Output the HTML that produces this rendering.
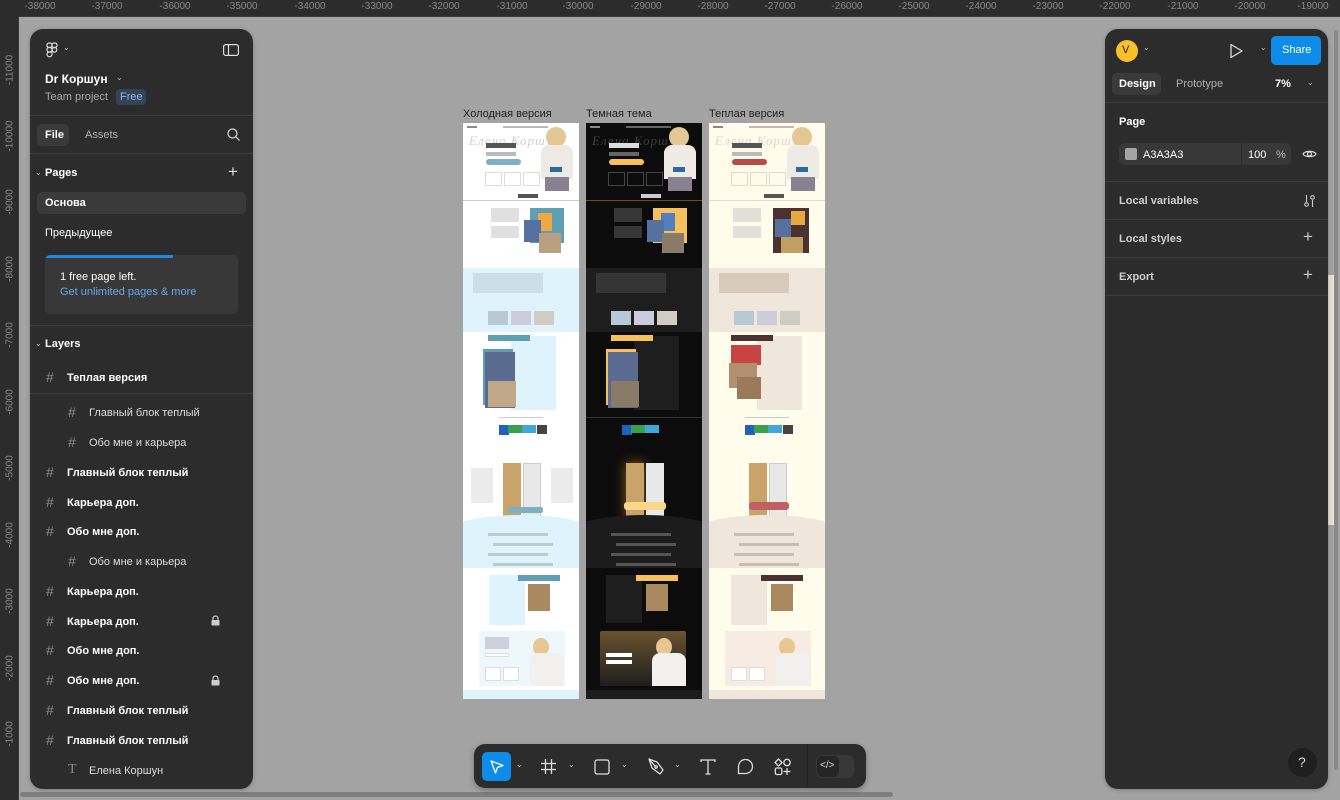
<!DOCTYPE html>
<html><head><meta charset="utf-8">
<style>
*{box-sizing:border-box;margin:0;padding:0}
body{width:1340px;height:800px;overflow:hidden;background:#a3a3a3;font-family:"Liberation Sans",sans-serif;position:relative;color:#fff}
.abs{position:absolute}
.rt{position:absolute;left:0;top:0;width:1340px;height:17px;background:#2c2c2c;border-bottom:1px solid #3a3a3a}
.rl{position:absolute;left:0;top:0;width:19px;height:800px;background:#2c2c2c;border-right:1px solid #3a3a3a}
.rt span{position:absolute;top:1px;font-size:10px;color:#8a8a8a;transform:translateX(-50%)}
.rl span{position:absolute;left:10px;font-size:10px;color:#8a8a8a;transform:translate(-50%,-50%) rotate(-90deg);white-space:nowrap}
.panel{position:absolute;background:#2c2c2c;border-radius:13px;box-shadow:0 1px 4px rgba(0,0,0,.25)}
.t{position:absolute;font-size:11px;white-space:nowrap}
.b{font-weight:bold}
.sep{position:absolute;left:0;right:0;height:1px;background:#3d3d3d}
.lay{position:absolute;font-size:11px;white-space:nowrap;color:#fff}
.hash{position:absolute;font-size:14px;color:#8a8a8a}
.fr{position:absolute;top:123px;width:116px;height:576px;overflow:hidden}
.fr div{position:absolute}
.fr .scr{white-space:nowrap;font-size:13px;font-style:italic;font-family:'Liberation Serif',serif;letter-spacing:1px}
.lbl{position:absolute;top:108px;font-size:11px;color:#1e1e1e}
</style></head><body>

<div class="rt">
<span style="left:40px">-38000</span><span style="left:107px">-37000</span><span style="left:175px">-36000</span><span style="left:242px">-35000</span><span style="left:310px">-34000</span><span style="left:377px">-33000</span><span style="left:444px">-32000</span><span style="left:512px">-31000</span><span style="left:578px">-30000</span><span style="left:646px">-29000</span><span style="left:713px">-28000</span><span style="left:780px">-27000</span><span style="left:847px">-26000</span><span style="left:914px">-25000</span><span style="left:981px">-24000</span><span style="left:1048px">-23000</span><span style="left:1115px">-22000</span><span style="left:1183px">-21000</span><span style="left:1250px">-20000</span><span style="left:1313px">-19000</span>
</div>
<div class="rl">
<span style="top:70px">-11000</span><span style="top:136px">-10000</span><span style="top:202px">-9000</span><span style="top:269px">-8000</span><span style="top:335px">-7000</span><span style="top:402px">-6000</span><span style="top:468px">-5000</span><span style="top:535px">-4000</span><span style="top:601px">-3000</span><span style="top:668px">-2000</span><span style="top:734px">-1000</span>
</div>
<div class="abs" style="left:0;top:0;width:19px;height:17px;background:#2c2c2c"></div>
<div class="abs" style="left:20px;top:792px;width:873px;height:5px;background:#7e7e7e;border-radius:3px"></div>
<div class="abs" style="left:1334px;top:30px;width:4px;height:740px;background:#8a8a8a;border-radius:2px"></div>
<div class="abs" style="left:1328px;top:275px;width:6px;height:250px;background:#e8e2d4"></div>

<!-- LEFT PANEL -->
<div class="panel" style="left:30px;top:29px;width:223px;height:760px">
 <svg class="abs" style="left:16px;top:13px" width="12" height="16" viewBox="0 0 12 16" fill="none" stroke="#ddd" stroke-width="1.2"><rect x="1" y="1" width="5" height="4.5" rx="2"/><rect x="6" y="1" width="5" height="4.5" rx="2"/><rect x="1" y="5.5" width="5" height="4.5" rx="2"/><circle cx="8.5" cy="7.8" r="2.3"/><path d="M1 12.3a2.3 2.3 0 0 1 2.3-2.3H6v2.3A2.3 2.3 0 1 1 1 12.3z"/></svg>
 <div class="t" style="left:33px;top:14px;font-size:8px;color:#bbb">⌄</div>
 <svg class="abs" style="left:193px;top:15px" width="16" height="12" viewBox="0 0 16 12" fill="none" stroke="#ddd" stroke-width="1.2"><rect x="0.6" y="0.6" width="14.8" height="10.8" rx="2"/><line x1="5.5" y1="1" x2="5.5" y2="11"/></svg>
 <div class="t b" style="left:15px;top:43px;font-size:12px">Dr Коршун</div>
 <div class="t" style="left:86px;top:44px;font-size:8px;color:#bbb">⌄</div>
 <div class="t" style="left:15px;top:62px;color:#a8a8a8">Team project</div>
 <div class="abs" style="left:86px;top:60px;width:30px;height:16px;background:#354258;border-radius:4px"></div>
 <div class="t" style="left:90px;top:62px;color:#8fb8ee">Free</div>
 <div class="sep" style="top:86px"></div>
 <div class="abs" style="left:7px;top:95px;width:32px;height:22px;background:#3a3a3a;border-radius:5px"></div>
 <div class="t b" style="left:15px;top:100px">File</div>
 <div class="t" style="left:55px;top:100px;color:#b0b0b0">Assets</div>
 <svg class="abs" style="left:197px;top:99px" width="13" height="13" viewBox="0 0 13 13" fill="none" stroke="#ddd" stroke-width="1.2"><circle cx="5.5" cy="5.5" r="4.5"/><line x1="9" y1="9" x2="12.5" y2="12.5"/></svg>
 <div class="sep" style="top:124px"></div>
 <div class="t" style="left:5px;top:139px;font-size:8px;color:#ccc">⌄</div>
 <div class="t b" style="left:15px;top:138px">Pages</div>
 <div class="t" style="left:198px;top:133px;font-size:17px;color:#ddd">+</div>
 <div class="abs" style="left:7px;top:163px;width:209px;height:22px;background:#3a3a3a;border-radius:5px"></div>
 <div class="t b" style="left:15px;top:168px">Основа</div>
 <div class="t" style="left:15px;top:198px">Предыдущее</div>
 <div class="abs" style="left:15px;top:226px;width:193px;height:59px;background:#383838;border-radius:5px;overflow:hidden"><div class="abs" style="left:0;top:0;width:128px;height:3px;background:#1e88e5"></div></div>
 <div class="t" style="left:30px;top:242px">1 free page left.</div>
 <div class="t" style="left:30px;top:257px;color:#68a8ec">Get unlimited pages &amp; more</div>
 <div class="sep" style="top:296px"></div>
 <div class="t" style="left:5px;top:310px;font-size:8px;color:#ccc">⌄</div>
 <div class="t b" style="left:15px;top:309px">Layers</div>
 <div class="sep" style="top:364px"></div>
 <div class="hash" style="left:16px;top:340px">#</div><div class="lay b" style="left:37px;top:343px">Теплая версия</div>
 <div class="hash" style="left:38px;top:375px">#</div><div class="lay" style="left:59px;top:378px;color:#ddd">Главный блок теплый</div>
 <div class="hash" style="left:38px;top:405px">#</div><div class="lay" style="left:59px;top:408px;color:#ddd">Обо мне и карьера</div>
 <div class="hash" style="left:16px;top:435px">#</div><div class="lay b" style="left:37px;top:438px">Главный блок теплый</div>
 <div class="hash" style="left:16px;top:465px">#</div><div class="lay b" style="left:37px;top:468px">Карьера доп.</div>
 <div class="hash" style="left:16px;top:494px">#</div><div class="lay b" style="left:37px;top:497px">Обо мне доп.</div>
 <div class="hash" style="left:38px;top:524px">#</div><div class="lay" style="left:59px;top:527px;color:#ddd">Обо мне и карьера</div>
 <div class="hash" style="left:16px;top:554px">#</div><div class="lay b" style="left:37px;top:557px">Карьера доп.</div>
 <div class="hash" style="left:16px;top:584px">#</div><div class="lay b" style="left:37px;top:587px">Карьера доп.</div>
 <svg class="abs" style="left:181px;top:586px" width="9" height="11" viewBox="0 0 9 11"><path d="M2 5V3.5a2.5 2.5 0 0 1 5 0V5" fill="none" stroke="#ccc" stroke-width="1.2"/><rect x="0.5" y="5" width="8" height="5.5" rx="1" fill="#ccc"/></svg>
 <div class="hash" style="left:16px;top:613px">#</div><div class="lay b" style="left:37px;top:616px">Обо мне доп.</div>
 <div class="hash" style="left:16px;top:643px">#</div><div class="lay b" style="left:37px;top:646px">Обо мне доп.</div>
 <svg class="abs" style="left:181px;top:646px" width="9" height="11" viewBox="0 0 9 11"><path d="M2 5V3.5a2.5 2.5 0 0 1 5 0V5" fill="none" stroke="#ccc" stroke-width="1.2"/><rect x="0.5" y="5" width="8" height="5.5" rx="1" fill="#ccc"/></svg>
 <div class="hash" style="left:16px;top:673px">#</div><div class="lay b" style="left:37px;top:676px">Главный блок теплый</div>
 <div class="hash" style="left:16px;top:703px">#</div><div class="lay b" style="left:37px;top:706px">Главный блок теплый</div>
 <div class="t" style="left:38px;top:733px;font-size:14px;color:#8a8a8a;font-family:'Liberation Serif',serif">T</div><div class="lay" style="left:59px;top:736px;color:#ddd">Елена Коршун</div>
</div>

<!-- RIGHT PANEL -->
<div class="panel" style="left:1105px;top:29px;width:223px;height:760px">
 <div class="abs" style="left:11px;top:11px;width:22px;height:22px;border-radius:50%;background:#f8c12a"></div>
 <div class="t" style="left:17px;top:15px;color:#222">V</div>
 <div class="t" style="left:38px;top:14px;font-size:8px;color:#bbb">⌄</div>
 <svg class="abs" style="left:124px;top:14px" width="14" height="16" viewBox="0 0 14 16"><path d="M2 1.5v13l11-6.5z" fill="none" stroke="#ddd" stroke-width="1.3" stroke-linejoin="round"/></svg>
 <div class="t" style="left:155px;top:14px;font-size:8px;color:#bbb">⌄</div>
 <div class="abs" style="left:166px;top:7px;width:50px;height:29px;background:#0d8ce9;border-radius:5px"></div>
 <div class="t" style="left:177px;top:15px">Share</div>
 <div class="abs" style="left:7px;top:44px;width:49px;height:22px;background:#3a3a3a;border-radius:5px"></div>
 <div class="t b" style="left:14px;top:49px">Design</div>
 <div class="t" style="left:71px;top:49px;color:#b0b0b0">Prototype</div>
 <div class="t b" style="left:170px;top:49px">7%</div>
 <div class="t" style="left:202px;top:49px;font-size:8px;color:#bbb">⌄</div>
 <div class="sep" style="top:73px"></div>
 <div class="t b" style="left:14px;top:87px">Page</div>
 <div class="abs" style="left:14px;top:114px;width:172px;height:22px;background:#383838;border-radius:5px"></div>
 <div class="abs" style="left:136px;top:114px;width:1px;height:22px;background:#2c2c2c"></div>
 <div class="abs" style="left:20px;top:119px;width:12px;height:12px;background:#a3a3a3;border-radius:2px"></div>
 <div class="t" style="left:38px;top:120px">A3A3A3</div>
 <div class="t" style="left:143px;top:120px">100</div>
 <div class="t" style="left:171px;top:120px;color:#bbb">%</div>
 <svg class="abs" style="left:197px;top:120px" width="15" height="10" viewBox="0 0 15 10" fill="none" stroke="#ddd" stroke-width="1.2"><path d="M1 5C3 1.5 12 1.5 14 5 12 8.5 3 8.5 1 5z"/><circle cx="7.5" cy="5" r="2"/></svg>
 <div class="sep" style="top:152px"></div>
 <div class="t b" style="left:14px;top:166px;color:#cfcfcf">Local variables</div>
 <svg class="abs" style="left:198px;top:165px" width="13" height="14" viewBox="0 0 13 14" fill="none" stroke="#ccc" stroke-width="1.1"><line x1="3.5" y1="1" x2="3.5" y2="8"/><circle cx="3.5" cy="10.5" r="1.8"/><line x1="9.5" y1="6" x2="9.5" y2="13"/><circle cx="9.5" cy="3.5" r="1.8"/></svg>
 <div class="sep" style="top:190px"></div>
 <div class="t b" style="left:14px;top:204px;color:#cfcfcf">Local styles</div>
 <div class="t" style="left:198px;top:198px;font-size:17px;color:#ccc">+</div>
 <div class="sep" style="top:228px"></div>
 <div class="t b" style="left:14px;top:242px;color:#cfcfcf">Export</div>
 <div class="t" style="left:198px;top:236px;font-size:17px;color:#ccc">+</div>
 <div class="sep" style="top:266px"></div>
 <div class="abs" style="left:183px;top:719px;width:29px;height:29px;border-radius:50%;background:#1f1f1f"></div>
 <div class="t" style="left:193px;top:725px;font-size:14px;color:#ddd">?</div>
</div>

<!-- TOOLBAR -->
<div class="abs" style="left:474px;top:744px;width:392px;height:44px;background:#2c2c2c;border-radius:11px;box-shadow:0 2px 6px rgba(0,0,0,.3)"></div>
<div class="abs" style="left:482px;top:752px;width:29px;height:29px;background:#0d8ce9;border-radius:5px"></div>
<svg class="abs" style="left:489px;top:759px" width="16" height="16" viewBox="0 0 16 16"><path d="M2 2l12 4.5-5.5 2-2 5.5z" fill="none" stroke="#fff" stroke-width="1.3" stroke-linejoin="round"/></svg>
<div class="t" style="left:516px;top:760px;font-size:8px;color:#ccc">⌄</div>
<svg class="abs" style="left:541px;top:759px" width="15" height="15" viewBox="0 0 15 15" stroke="#ddd" stroke-width="1.3"><line x1="4.5" y1="0" x2="4.5" y2="15"/><line x1="10.5" y1="0" x2="10.5" y2="15"/><line x1="0" y1="4.5" x2="15" y2="4.5"/><line x1="0" y1="10.5" x2="15" y2="10.5"/></svg>
<div class="t" style="left:568px;top:760px;font-size:8px;color:#ccc">⌄</div>
<svg class="abs" style="left:594px;top:759px" width="16" height="16" viewBox="0 0 16 16"><rect x="1" y="1" width="14" height="14" rx="2" fill="none" stroke="#ddd" stroke-width="1.3"/></svg>
<div class="t" style="left:621px;top:760px;font-size:8px;color:#ccc">⌄</div>
<svg class="abs" style="left:648px;top:758px" width="16" height="17" viewBox="0 0 16 17" fill="none" stroke="#ddd" stroke-width="1.3" stroke-linejoin="round"><path d="M1 1l3 9 8 6 3-4-6-8z"/><circle cx="8" cy="9" r="1.2"/><line x1="1" y1="1" x2="7" y2="8"/></svg>
<div class="t" style="left:674px;top:760px;font-size:8px;color:#ccc">⌄</div>
<svg class="abs" style="left:700px;top:759px" width="16" height="16" viewBox="0 0 16 16" stroke="#ddd" stroke-width="1.3" fill="none"><path d="M1 3V1h14v2M8 1v14M5.5 15h5"/></svg>
<svg class="abs" style="left:737px;top:758px" width="17" height="17" viewBox="0 0 17 17"><path d="M8.5 1.5a7 7 0 1 1 0 14H1.5V8.5a7 7 0 0 1 7-7z" fill="none" stroke="#ddd" stroke-width="1.3"/></svg>
<svg class="abs" style="left:774px;top:758px" width="18" height="18" viewBox="0 0 18 18" fill="none" stroke="#ddd" stroke-width="1.3"><path d="M4.5 1l3.5 3.5-3.5 3.5-3.5-3.5z"/><circle cx="13" cy="4.5" r="3.2"/><rect x="1.3" y="10" width="6.5" height="6.5" rx="1.5"/><path d="M13 10v7M9.5 13.5h7"/></svg>
<div class="abs" style="left:807px;top:744px;width:1px;height:44px;background:#232323"></div>
<div class="abs" style="left:816px;top:755px;width:38px;height:23px;background:#383838;border-radius:6px"></div>
<div class="abs" style="left:817px;top:756px;width:22px;height:21px;background:#252525;border-radius:5px"></div>
<div class="t" style="left:820px;top:760px;font-size:10px;color:#ddd">&lt;/&gt;</div>

<!-- FRAME LABELS -->
<div class="lbl" style="left:463px">Холодная версия</div>
<div class="lbl" style="left:586px">Темная тема</div>
<div class="lbl" style="left:709px">Теплая версия</div>

<!-- COLD FRAME -->
<div class="fr" style="left:463px;background:#fff">
 <div style="left:4px;top:3px;width:10px;height:2px;background:#888"></div>
 <div style="left:40px;top:3px;width:45px;height:2px;background:#bbb"></div>
 <div class="scr" style="left:6px;top:10px;color:#cfcfcf">Елена Коршун</div>
 <div style="left:23px;top:20px;width:30px;height:5px;background:#555"></div>
 <div style="left:23px;top:29px;width:30px;height:4px;background:#bbb"></div>
 <div style="left:23px;top:36px;width:35px;height:6px;background:#7fb0c0;border-radius:3px"></div>
 <div style="left:22px;top:49px;width:17px;height:14px;border:1px solid #ddd"></div>
 <div style="left:41px;top:49px;width:17px;height:14px;border:1px solid #ddd"></div>
 <div style="left:60px;top:49px;width:17px;height:14px;border:1px solid #ddd"></div>
 <div style="left:83px;top:4px;width:20px;height:20px;background:#e3c795;border-radius:50%"></div>
 <div style="left:78px;top:22px;width:32px;height:34px;background:#eeeae6;border-radius:8px 8px 0 0"></div>
 <div style="left:87px;top:44px;width:12px;height:5px;background:#2a6aa0"></div>
 <div style="left:82px;top:54px;width:24px;height:14px;background:#888190"></div>
 <div style="left:55px;top:71px;width:20px;height:4px;background:#555"></div>
 <div style="left:0;top:77px;width:116px;height:1px;background:#ccc"></div>
 <div style="left:28px;top:85px;width:28px;height:14px;background:#ccc;opacity:.6"></div>
 <div style="left:28px;top:103px;width:28px;height:12px;background:#ccc;opacity:.6"></div>
 <div style="left:67px;top:85px;width:34px;height:35px;background:#5f9fb4"></div>
 <div style="left:75px;top:90px;width:14px;height:18px;background:#f0a840"></div>
 <div style="left:61px;top:97px;width:17px;height:22px;background:#5670a0"></div>
 <div style="left:76px;top:110px;width:22px;height:20px;background:#b9a080"></div>
 <div style="left:0;top:145px;width:116px;height:64px;background:#def3fc"></div>
 <div style="left:10px;top:150px;width:70px;height:20px;background:#c0d0d8;opacity:.6"></div>
 <div style="left:25px;top:188px;width:20px;height:14px;background:#b8c8d4"></div>
 <div style="left:48px;top:188px;width:20px;height:14px;background:#ccd"></div>
 <div style="left:71px;top:188px;width:20px;height:14px;background:#d0ccc4"></div>
 <div style="left:48px;top:213px;width:45px;height:74px;background:#def3fc"></div>
 <div style="left:25px;top:212px;width:42px;height:6px;background:#5f9fb4"></div>
 <div style="left:20px;top:226px;width:30px;height:56px;background:#5f9fb4"></div>
 <div style="left:22px;top:229px;width:30px;height:56px;background:#5a6a90"></div>
 <div style="left:25px;top:258px;width:28px;height:26px;background:#c0a888"></div>
 <div style="left:36px;top:294px;width:44px;height:1px;background:#ccc"></div>
 <div style="left:36px;top:302px;width:10px;height:10px;background:#2060c0"></div>
 <div style="left:45px;top:302px;width:14px;height:8px;background:#3aa050"></div>
 <div style="left:59px;top:302px;width:14px;height:8px;background:#40a8d8"></div>
 <div style="left:74px;top:302px;width:10px;height:9px;background:#444"></div>
 <div style="left:40px;top:340px;width:18px;height:55px;background:#c9a36a"></div>
 <div style="left:60px;top:340px;width:18px;height:55px;background:#e8e8e8;border:1px solid #ccc"></div>
 <div style="left:8px;top:345px;width:22px;height:35px;background:#d8d8d8;opacity:.5"></div>
 <div style="left:88px;top:345px;width:22px;height:35px;background:#d8d8d8;opacity:.5"></div>
 <div style="left:-20px;top:392px;width:156px;height:110px;background:#def3fc;border-radius:50% 50% 0 0/20px 20px 0 0"></div>
 <div style="left:45px;top:384px;width:35px;height:6px;background:#7fb0c0;border-radius:2px"></div>
 <div style="left:25px;top:410px;width:60px;height:3px;background:#bcc"></div>
 <div style="left:30px;top:420px;width:60px;height:3px;background:#bcc"></div>
 <div style="left:25px;top:430px;width:60px;height:3px;background:#bcc"></div>
 <div style="left:30px;top:440px;width:60px;height:3px;background:#bcc"></div>
 <div style="left:0;top:445px;width:116px;height:60px;background:#fff"></div>
 <div style="left:26px;top:452px;width:36px;height:50px;background:#def3fc"></div>
 <div style="left:55px;top:452px;width:42px;height:6px;background:#5f9fb4"></div>
 <div style="left:65px;top:461px;width:22px;height:27px;background:#a98a60"></div>
 <div style="left:16px;top:508px;width:86px;height:55px;background:#eef8fc"></div>
 <div style="left:22px;top:514px;width:24px;height:12px;background:#aab;opacity:.5"></div>
 <div style="left:22px;top:530px;width:24px;height:4px;background:#fff;border:1px solid #ddd"></div>
 <div style="left:22px;top:544px;width:16px;height:14px;background:#fff;border:1px solid #ddd"></div>
 <div style="left:40px;top:544px;width:16px;height:14px;background:#fff;border:1px solid #ddd"></div>
 <div style="left:70px;top:515px;width:16px;height:18px;background:#e6c890;border-radius:50%"></div>
 <div style="left:67px;top:530px;width:34px;height:33px;background:#f2f0ee;border-radius:8px 8px 0 0"></div>
 <div style="left:0;top:567px;width:116px;height:9px;background:#def3fc"></div>
</div>

<!-- DARK FRAME -->
<div class="fr" style="left:586px;background:#0c0c0c">
 <div style="left:4px;top:3px;width:10px;height:2px;background:#888"></div>
 <div style="left:40px;top:3px;width:45px;height:2px;background:#666"></div>
 <div class="scr" style="left:6px;top:10px;color:#3e3e3e">Елена Коршун</div>
 <div style="left:23px;top:20px;width:30px;height:5px;background:#ddd"></div>
 <div style="left:23px;top:29px;width:30px;height:4px;background:#666"></div>
 <div style="left:23px;top:36px;width:35px;height:6px;background:#f7c05a;border-radius:3px"></div>
 <div style="left:22px;top:49px;width:17px;height:14px;border:1px solid #444"></div>
 <div style="left:41px;top:49px;width:17px;height:14px;border:1px solid #444"></div>
 <div style="left:60px;top:49px;width:17px;height:14px;border:1px solid #444"></div>
 <div style="left:83px;top:4px;width:20px;height:20px;background:#e3c795;border-radius:50%"></div>
 <div style="left:78px;top:22px;width:32px;height:34px;background:#eeeae6;border-radius:8px 8px 0 0"></div>
 <div style="left:87px;top:44px;width:12px;height:5px;background:#2a6aa0"></div>
 <div style="left:82px;top:54px;width:24px;height:14px;background:#888190"></div>
 <div style="left:55px;top:71px;width:20px;height:4px;background:#ccc"></div>
 <div style="left:0;top:77px;width:116px;height:1px;background:#6a5020"></div>
 <div style="left:28px;top:85px;width:28px;height:14px;background:#555;opacity:.6"></div>
 <div style="left:28px;top:103px;width:28px;height:12px;background:#555;opacity:.6"></div>
 <div style="left:67px;top:85px;width:34px;height:35px;background:#f7c05a"></div>
 <div style="left:75px;top:90px;width:14px;height:18px;background:#5080c0"></div>
 <div style="left:61px;top:97px;width:17px;height:22px;background:#5670a0"></div>
 <div style="left:76px;top:110px;width:22px;height:20px;background:#8a7a68"></div>
 <div style="left:0;top:145px;width:116px;height:64px;background:#1e1e1e"></div>
 <div style="left:10px;top:150px;width:70px;height:20px;background:#444;opacity:.6"></div>
 <div style="left:25px;top:188px;width:20px;height:14px;background:#b8c8d4"></div>
 <div style="left:48px;top:188px;width:20px;height:14px;background:#ccd"></div>
 <div style="left:71px;top:188px;width:20px;height:14px;background:#d0ccc4"></div>
 <div style="left:48px;top:213px;width:45px;height:74px;background:#1e1e1e"></div>
 <div style="left:25px;top:212px;width:42px;height:6px;background:#f7c05a"></div>
 <div style="left:20px;top:226px;width:30px;height:56px;background:#f7c05a"></div>
 <div style="left:22px;top:229px;width:30px;height:56px;background:#5a6a90"></div>
 <div style="left:25px;top:258px;width:28px;height:26px;background:#8a7a68"></div>
 <div style="left:0;top:294px;width:116px;height:1px;background:#333"></div>
 <div style="left:36px;top:302px;width:10px;height:10px;background:#2060c0"></div>
 <div style="left:45px;top:302px;width:14px;height:8px;background:#3aa050"></div>
 <div style="left:59px;top:302px;width:14px;height:8px;background:#40a8d8"></div>
 <div style="left:40px;top:340px;width:18px;height:55px;background:#c9a36a;box-shadow:0 0 12px #8a6020"></div>
 <div style="left:60px;top:340px;width:18px;height:55px;background:#e8e8e8"></div>
 <div style="left:-20px;top:392px;width:156px;height:110px;background:#1c1c1c;border-radius:50% 50% 0 0/20px 20px 0 0"></div>
 <div style="left:38px;top:379px;width:42px;height:8px;background:#fcd788;border-radius:3px"></div>
 <div style="left:25px;top:410px;width:60px;height:3px;background:#555"></div>
 <div style="left:30px;top:420px;width:60px;height:3px;background:#555"></div>
 <div style="left:25px;top:430px;width:60px;height:3px;background:#555"></div>
 <div style="left:30px;top:440px;width:60px;height:3px;background:#555"></div>
 <div style="left:0;top:445px;width:116px;height:60px;background:#0c0c0c"></div>
 <div style="left:20px;top:452px;width:36px;height:48px;background:#1e1e1e"></div>
 <div style="left:50px;top:452px;width:42px;height:6px;background:#f7c05a"></div>
 <div style="left:60px;top:461px;width:22px;height:27px;background:#a98a60"></div>
 <div style="left:14px;top:508px;width:86px;height:55px;background:linear-gradient(#6a5330,#1e1e1e);border-radius:2px"></div>
 <div style="left:20px;top:530px;width:26px;height:4px;background:#fff"></div>
 <div style="left:20px;top:537px;width:26px;height:4px;background:#fff"></div>
 <div style="left:70px;top:515px;width:16px;height:18px;background:#e6c890;border-radius:50%"></div>
 <div style="left:66px;top:530px;width:34px;height:33px;background:#f2f0ee;border-radius:8px 8px 0 0"></div>
 <div style="left:0;top:567px;width:116px;height:9px;background:#1c1c1c"></div>
</div>

<!-- WARM FRAME -->
<div class="fr" style="left:709px;background:#fffcec">
 <div style="left:4px;top:3px;width:10px;height:2px;background:#888"></div>
 <div style="left:40px;top:3px;width:45px;height:2px;background:#bbb"></div>
 <div class="scr" style="left:6px;top:10px;color:#ddd5c8">Елена Коршун</div>
 <div style="left:23px;top:20px;width:30px;height:5px;background:#555"></div>
 <div style="left:23px;top:29px;width:30px;height:4px;background:#bbb"></div>
 <div style="left:23px;top:36px;width:35px;height:6px;background:#b84a4a;border-radius:3px"></div>
 <div style="left:22px;top:49px;width:17px;height:14px;border:1px solid #e0d8cc"></div>
 <div style="left:41px;top:49px;width:17px;height:14px;border:1px solid #e0d8cc"></div>
 <div style="left:60px;top:49px;width:17px;height:14px;border:1px solid #e0d8cc"></div>
 <div style="left:83px;top:4px;width:20px;height:20px;background:#e3c795;border-radius:50%"></div>
 <div style="left:78px;top:22px;width:32px;height:34px;background:#eeeae6;border-radius:8px 8px 0 0"></div>
 <div style="left:87px;top:44px;width:12px;height:5px;background:#2a6aa0"></div>
 <div style="left:82px;top:54px;width:24px;height:14px;background:#888190"></div>
 <div style="left:55px;top:71px;width:20px;height:4px;background:#555"></div>
 <div style="left:0;top:77px;width:116px;height:1px;background:#ddd"></div>
 <div style="left:24px;top:85px;width:28px;height:14px;background:#ccc;opacity:.6"></div>
 <div style="left:24px;top:103px;width:28px;height:12px;background:#ccc;opacity:.6"></div>
 <div style="left:64px;top:85px;width:36px;height:45px;background:#4a3232"></div>
 <div style="left:66px;top:96px;width:16px;height:18px;background:#5670a0"></div>
 <div style="left:82px;top:88px;width:14px;height:14px;background:#e8a840"></div>
 <div style="left:72px;top:114px;width:22px;height:16px;background:#c0a060"></div>
 <div style="left:0;top:145px;width:116px;height:64px;background:#efe6dc"></div>
 <div style="left:10px;top:150px;width:70px;height:20px;background:#c8b8a8;opacity:.6"></div>
 <div style="left:25px;top:188px;width:20px;height:14px;background:#b8c8d4"></div>
 <div style="left:48px;top:188px;width:20px;height:14px;background:#ccd"></div>
 <div style="left:71px;top:188px;width:20px;height:14px;background:#d0ccc4"></div>
 <div style="left:48px;top:213px;width:45px;height:74px;background:#efe6dc"></div>
 <div style="left:22px;top:212px;width:42px;height:6px;background:#4a3232"></div>
 <div style="left:22px;top:222px;width:30px;height:20px;background:#c84444"></div>
 <div style="left:20px;top:240px;width:28px;height:25px;background:#b09070"></div>
 <div style="left:28px;top:254px;width:24px;height:22px;background:#9a7a5a"></div>
 <div style="left:36px;top:294px;width:44px;height:1px;background:#ccc"></div>
 <div style="left:36px;top:302px;width:10px;height:10px;background:#2060c0"></div>
 <div style="left:45px;top:302px;width:14px;height:8px;background:#3aa050"></div>
 <div style="left:59px;top:302px;width:14px;height:8px;background:#40a8d8"></div>
 <div style="left:74px;top:302px;width:10px;height:9px;background:#444"></div>
 <div style="left:40px;top:340px;width:18px;height:55px;background:#c9a36a"></div>
 <div style="left:60px;top:340px;width:18px;height:55px;background:#e8e8e8;border:1px solid #ccc"></div>
 <div style="left:-20px;top:392px;width:156px;height:110px;background:#efe6dc;border-radius:50% 50% 0 0/20px 20px 0 0"></div>
 <div style="left:40px;top:379px;width:40px;height:8px;background:#c06060;border-radius:3px"></div>
 <div style="left:25px;top:410px;width:60px;height:3px;background:#c8beb4"></div>
 <div style="left:30px;top:420px;width:60px;height:3px;background:#c8beb4"></div>
 <div style="left:25px;top:430px;width:60px;height:3px;background:#c8beb4"></div>
 <div style="left:30px;top:440px;width:60px;height:3px;background:#c8beb4"></div>
 <div style="left:0;top:445px;width:116px;height:60px;background:#fffcec"></div>
 <div style="left:22px;top:452px;width:36px;height:50px;background:#efe6dc"></div>
 <div style="left:52px;top:452px;width:42px;height:6px;background:#4a3232"></div>
 <div style="left:62px;top:461px;width:22px;height:27px;background:#a98a60"></div>
 <div style="left:16px;top:508px;width:86px;height:55px;background:#f6ece4"></div>
 <div style="left:22px;top:544px;width:16px;height:14px;background:#fff;border:1px solid #ddd"></div>
 <div style="left:40px;top:544px;width:16px;height:14px;background:#fff;border:1px solid #ddd"></div>
 <div style="left:70px;top:515px;width:16px;height:18px;background:#e6c890;border-radius:50%"></div>
 <div style="left:67px;top:530px;width:34px;height:33px;background:#f2f0ee;border-radius:8px 8px 0 0"></div>
 <div style="left:0;top:567px;width:116px;height:9px;background:#efe6dc"></div>
</div>

</body></html>
